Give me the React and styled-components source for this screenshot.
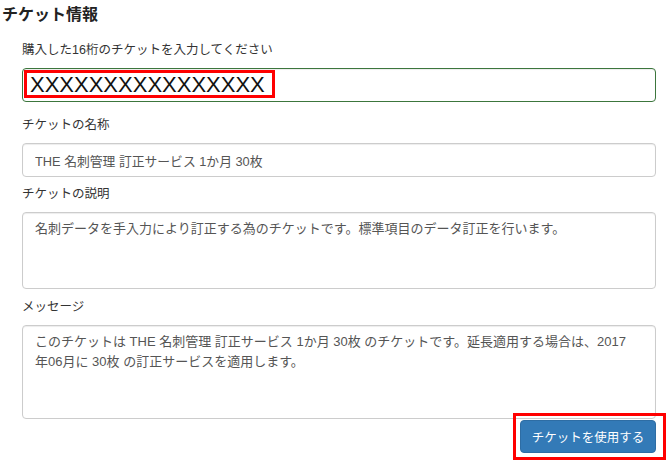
import React from 'react';
import styled, { createGlobalStyle } from 'styled-components';

const GlobalStyle = createGlobalStyle`
    html, body {
        margin: 0;
        padding: 0;
        background: #fff;
    }
    body {
        font-family: "Liberation Sans", "Noto Sans CJK JP", sans-serif;
        color: #333;
    }
`;

const Page = styled.div`
    width: 667px;
    height: 462px;
    overflow: hidden;
`;

const Title = styled.h3`
    margin: 0;
    padding-left: 2px;
    font-size: 16px;
    font-weight: bold;
    line-height: 30px;
    color: #222;
`;

const Form = styled.div`
    padding: 0 11px 0 22px;
`;

const Label = styled.label`
    display: block;
    margin-top: ${({ $top }) => $top}px;
    margin-bottom: 8px;
    font-size: 12.5px;
    line-height: 20px;
    color: #333;
`;

const CodeField = styled.div`
    box-sizing: border-box;
    height: 34px;
    padding: 1px;
    border: 1px solid #3c763d;
    border-radius: 4px;
    box-shadow: inset 0 1px 1px rgba(0, 0, 0, 0.075);
`;

// 入力値を囲む赤い注釈枠
const Marked = styled.span`
    display: inline-block;
    box-sizing: border-box;
    height: 28px;
    padding: 1px 7px 0 3px;
    border: 3px solid #ff0000;
    font-family: "Liberation Sans", Arial, sans-serif;
    font-size: 22px;
    line-height: 22px;
    color: #111;
`;

const TextInput = styled.input`
    display: block;
    box-sizing: border-box;
    width: 100%;
    height: 34px;
    margin: 0;
    padding: 6px 12px;
    border: 1px solid #ccc;
    border-radius: 4px;
    box-shadow: inset 0 1px 1px rgba(0, 0, 0, 0.075);
    background: #fff;
    font-family: inherit;
    font-size: 12.8px;
    color: #555;
    outline: none;
`;

const TextArea = styled.textarea`
    display: block;
    box-sizing: border-box;
    width: 100%;
    height: ${({ $h }) => $h}px;
    margin: 0;
    padding: 6px 20px 6px 12px;
    border: 1px solid #ccc;
    border-radius: 4px;
    box-shadow: inset 0 1px 1px rgba(0, 0, 0, 0.075);
    background: #fff;
    font-family: inherit;
    font-size: 13px;
    line-height: 20px;
    color: #555;
    resize: none;
    overflow: hidden;
    outline: none;
`;

const Actions = styled.div`
    display: flex;
    justify-content: flex-end;
    margin-top: 1px;
`;

const Highlight = styled.div`
    position: relative;
    &::after {
        content: '';
        position: absolute;
        top: -7px;
        left: -7px;
        right: -10px;
        bottom: -7px;
        border: 3px solid #ff0000;
        pointer-events: none;
    }
`;

const Button = styled.button`
    display: block;
    box-sizing: border-box;
    width: 136px;
    height: 33px;
    padding: 0;
    border: 1px solid #2e6da4;
    border-radius: 4px;
    background: #337ab7;
    color: #fff;
    font-family: inherit;
    font-size: 12.5px;
    cursor: pointer;
`;

const ticketName = 'THE 名刺管理 訂正サービス 1か月 30枚';
const description = '名刺データを手入力により訂正する為のチケットです。標準項目のデータ訂正を行います。';
const message =
    'このチケットは THE 名刺管理 訂正サービス 1か月 30枚 のチケットです。延長適用する場合は、2017年06月に 30枚 の訂正サービスを適用します。';

export default function App() {
    return (
        <Page>
            <GlobalStyle />
            <Title>チケット情報</Title>
            <Form>
                <Label $top={10}>購入した16桁のチケットを入力してください</Label>
                <CodeField>
                    <Marked>XXXXXXXXXXXXXXXX</Marked>
                </CodeField>

                <Label $top={13}>チケットの名称</Label>
                <TextInput readOnly value={ticketName} />

                <Label $top={7}>チケットの説明</Label>
                <TextArea $h={77} readOnly value={description} />

                <Label $top={8}>メッセージ</Label>
                <TextArea $h={94} readOnly value={message} />

                <Actions>
                    <Highlight>
                        <Button type="button">チケットを使用する</Button>
                    </Highlight>
                </Actions>
            </Form>
        </Page>
    );
}
